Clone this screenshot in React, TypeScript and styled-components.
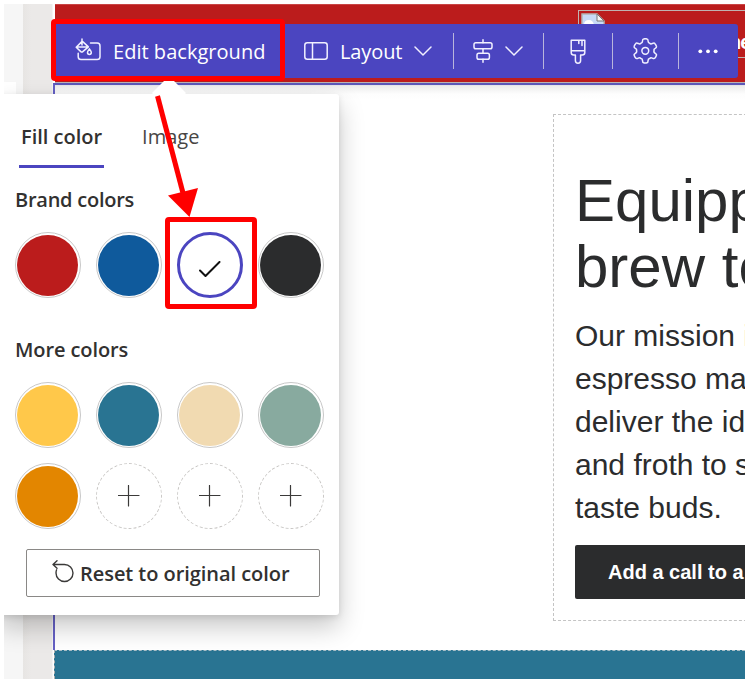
import React from "react";
import styled, { createGlobalStyle } from "styled-components";

const ui = `"Open Sans", "Noto Sans", sans-serif`;
const arial = `"Liberation Sans", Arial, sans-serif`;
const indigo = "#4b45c0";

const GlobalStyle = createGlobalStyle`
  *, *::before, *::after { box-sizing: border-box; }
  body { margin: 0; background: #fff; overflow: hidden; }
  button { font: inherit; margin: 0; cursor: pointer; }
`;

const Frame = styled.main`
  position: relative;
  display: flex;
  width: 741px;
  height: 675px;
  margin: 4px 0 0 4px;
  overflow: hidden;
  background: #fff;
`;

const Rail = styled.aside`
  flex: 0 0 19px;
  padding-top: 78px;
  background: #f6f6f6;
`;
const RailCard = styled.div`
  width: 12px;
  height: 300px;
  background: #fff;
`;
const Gutter = styled.div`
  flex: 0 0 30px;
  background: linear-gradient(90deg, #e7e5e3, #ebe9e8 8px);
  border-right: 1px solid #f4f4f4;
`;

const Canvas = styled.div`
  flex: 1;
  min-width: 0;
  display: flex;
  flex-direction: column;
`;
const Banner = styled.header`
  height: 79px;
  margin-left: 2px;
  padding: 6px 0 0 523px;
  background: #bb1c1c;
  border-top: 1px solid #c94444;
  border-bottom: 1px solid #b9b3b3;
`;
const MissingImage = styled.div`
  display: flex;
  width: 300px;
  height: 48px;
  padding: 2px;
  margin-top: -1px;
  border: 1px solid #c0b3b0;
`;
const AltText = styled.span`
  margin: 17px 0 0 124px;
  font: bold 20px/24px ${arial};
  letter-spacing: -1px;
  color: #fff;
`;
const Section = styled.section`
  height: 567px;
  padding: 29px 0 0 498px;
  border-left: 2px solid #6560c4;
  border-top: 2px solid #5c57b8;
  background: linear-gradient(#dddce8, #ececec 1px, #fdfdfd 9px, #fff 15px);
`;
const Column = styled.div`
  width: 400px;
  height: 507px;
  padding: 53px 0 0 21px;
  border: 1px dashed #c4c4c4;
  white-space: nowrap;
  color: #2b2c2d;
`;
const Heading = styled.h1`
  margin: 0;
  font: 400 60px/66px ${arial};
`;
const Copy = styled.p`
  margin: 14px 0 0;
  font: 30px/43px ${arial};
`;
const CallToAction = styled.button`
  display: block;
  width: 300px;
  height: 54px;
  margin-top: 16px;
  padding: 0 0 0 33px;
  border: 0;
  border-radius: 2px;
  background: #2b2c2d;
  color: #fff;
  text-align: left;
  && { font: bold 20px/54px ${arial}; }
`;
const Footer = styled.footer`
  height: 29px;
  margin-left: 1px;
  border-top: 1px dashed #a8bdc6;
  border-left: 1px dashed #b0b0b0;
  background: #297492;
`;

const Toolbar = styled.nav`
  position: absolute;
  left: 51px;
  top: 20px;
  z-index: 3;
  display: flex;
  width: 683px;
  height: 54px;
  border-radius: 0 3px 3px 0;
  background: ${indigo};
`;
const Tool = styled.button<{ $width: number; $pad?: number; $gap?: number }>`
  flex: 0 0 ${(p) => p.$width}px;
  display: flex;
  align-items: center;
  gap: ${(p) => p.$gap ?? 12}px;
  padding: 0 0 0 ${(p) => p.$pad ?? 20}px;
  border: 0;
  background: none;
  color: #fff;
  white-space: nowrap;
`;
const ToolText = styled.span<{ $track: number }>`
  padding-top: 1px;
  font: 400 20px/28px ${ui};
  letter-spacing: ${(p) => p.$track}px;
`;
const Divider = styled.span`
  flex: 0 0 1px;
  height: 36px;
  margin-top: 9px;
  background: #b9b5dc;
`;
const ToolIcon = styled.svg`
  flex: none;
  display: block;
  fill: none;
  stroke: #f1f0ff;
  stroke-width: 1.5;
  stroke-linecap: round;
  stroke-linejoin: round;
`;

const Popover = styled.section`
  position: absolute;
  left: -5px;
  top: 90px;
  z-index: 2;
  width: 340px;
  height: 521px;
  padding: 0 0 0 16px;
  border-radius: 3px;
  background: #fff;
  box-shadow: 0 12px 26px rgba(0, 0, 0, 0.22), 0 2px 6px rgba(0, 0, 0, 0.1);
  &::before {
    content: "";
    position: absolute;
    left: 158px;
    top: -13px;
    width: 24px;
    height: 24px;
    background: #fff;
    transform: rotate(45deg);
  }
`;
const Tabs = styled.div`
  position: relative;
  display: flex;
  gap: 38px;
  padding-left: 4px;
`;
const Tab = styled.button<{ $active?: boolean; $track: number }>`
  height: 74px;
  padding: 15px 0 0 ${(p) => (p.$active ? 2 : 0)}px;
  width: ${(p) => (p.$active ? 85 : 64)}px;
  border: 0;
  border-bottom: 3px solid ${(p) => (p.$active ? indigo : "transparent")};
  background: none;
  text-align: left;
  white-space: nowrap;
  color: ${(p) => (p.$active ? "#323130" : "#484644")};
  && { font: ${(p) => (p.$active ? 600 : 400)} 20px/28px ${ui}; }
  && { letter-spacing: ${(p) => p.$track}px; }
`;
const GroupTitle = styled.h2<{ $top: number; $track: number }>`
  margin: ${(p) => p.$top}px 0 18px;
  font: 600 20px/28px ${ui};
  letter-spacing: ${(p) => p.$track}px;
  color: #323130;
  white-space: nowrap;
`;
const Swatches = styled.div`
  display: grid;
  grid-template-columns: repeat(4, 66px);
  gap: 15px;
`;
const Swatch = styled.button<{ $fill?: string; $kind?: "selected" | "empty" }>`
  display: grid;
  place-items: center;
  width: 66px;
  height: 66px;
  padding: ${(p) => (p.$kind ? "0" : "2px 2px 1px 1px")};
  border-radius: 50%;
  border: ${(p) =>
    p.$kind === "selected"
      ? `3px solid ${indigo}`
      : p.$kind === "empty"
        ? "1px dashed #c8c6c4"
        : "1px solid #c8c8c8"};
  background: ${(p) => p.$fill ?? "#fff"} content-box;
`;
const Reset = styled.button`
  display: flex;
  align-items: flex-start;
  gap: 6px;
  width: 294px;
  height: 48px;
  margin: 20px 0 0 11px;
  padding: 10px 0 0 25px;
  border: 1px solid #8a8886;
  border-radius: 2px;
  background: #fff;
  color: #323130;
  white-space: nowrap;
  && { font: 600 20px/28px ${ui}; }
  && { letter-spacing: -0.05px; }
`;
const Glyph = styled.svg<{ $drop?: number }>`
  display: block;
  flex: none;
  margin-top: ${(p) => p.$drop ?? 0}px;
  fill: none;
  stroke: #3b3a39;
  stroke-linecap: round;
  stroke-linejoin: round;
`;

const Highlight = styled.div<{ $x: number; $y: number; $w: number; $h: number }>`
  position: absolute;
  z-index: 4;
  left: ${(p) => p.$x}px;
  top: ${(p) => p.$y}px;
  width: ${(p) => p.$w}px;
  height: ${(p) => p.$h}px;
  border: 5px solid #f00;
  border-radius: 4px;
  pointer-events: none;
`;
const Arrow = styled.svg`
  position: absolute;
  z-index: 5;
  left: 146px;
  top: 86px;
  pointer-events: none;
`;

const BucketIcon = () => (
  <ToolIcon width="26" height="26" viewBox="0 1.500 26 26">
    <path d="M7 2.500v6M6.600 5.400 1.200 10.800l4.600 4.300q1 .9 2 0l5.600-4.700L8 5.400q-.8-.6-1.400 0zM1.600 10.600h11" />
    <path d="M15.500 6.600h6.700q2.800 0 2.800 2.800v10.800q0 2.800-2.800 2.800H6q-2.800 0-2.800-2.800v-3.500" />
    <path d="M14.400 12.400q-1.900 2.400-1.900 3.600a1.900 1.900 0 0 0 3.800 0q0-1.200-1.900-3.600z" />
  </ToolIcon>
);
const LayoutIcon = () => (
  <ToolIcon width="24" height="18" viewBox="0 0 24 18">
    <rect x=".8" y=".8" width="22.400" height="16.400" rx="2.500" />
    <path d="M8.500 1v16" />
  </ToolIcon>
);
const Chevron = () => (
  <ToolIcon width="18" height="10" viewBox="0 0 18 10">
    <path d="M1 1l8 8 8-8" />
  </ToolIcon>
);
const AlignIcon = () => (
  <ToolIcon width="20" height="24" viewBox="0 0 20 24">
    <rect x="1" y="3.800" width="18" height="6" rx="1.800" />
    <rect x="4" y="14.200" width="12.400" height="6" rx="1.800" />
    <path d="M10 .8v3M10 9.800v4.400M10 20.200v3" />
  </ToolIcon>
);
const BrushIcon = () => (
  <ToolIcon width="16" height="25" viewBox="0 0 16 25">
    <path d="M1.200 1.200h13.600v12.300q0 2.500-2.500 2.500H10.600v5.600a2.600 2.600 0 0 1-5.200 0V16H3.700q-2.500 0-2.500-2.500zM1.200 11.800h13.600M8.800 1.500v3M12 1.500v5" />
  </ToolIcon>
);

/** Six-toothed gear outline centred on the origin. */
const gearPath = () => {
  const at = (deg: number, r: number) => {
    const a = (deg * Math.PI) / 180;
    return `${(Math.sin(a) * r).toFixed(2)} ${(-Math.cos(a) * r).toFixed(2)}`;
  };
  let d = "";
  for (let t = 0; t < 360; t += 60) {
    d += `${t ? "L" : "M"}${at(t - 16, 10.2)}Q${at(t - 13, 12.1)} ${at(t - 8, 12)}`;
    d += `Q${at(t, 12.3)} ${at(t + 8, 12)}Q${at(t + 13, 12.1)} ${at(t + 16, 10.2)}`;
    d += `Q${at(t + 19, 8.3)} ${at(t + 30, 8.8)}Q${at(t + 41, 8.3)} ${at(t + 44, 10.2)}`;
  }
  return d + "Z";
};
const GearIcon = () => (
  <ToolIcon width="26" height="26" viewBox="-13.300 -12.800 26 26">
    <path d={gearPath()} />
    <circle r="3.400" />
  </ToolIcon>
);
const MoreIcon = () => (
  <ToolIcon width="20" height="6" viewBox="0 0 20 6">
    <g fill="#fff" stroke="none">
      <circle cx="2.300" cy="3.300" r="1.900" />
      <circle cx="10" cy="3.300" r="1.900" />
      <circle cx="17.700" cy="3.300" r="1.900" />
    </g>
  </ToolIcon>
);
const BrokenImageIcon = () => (
  <svg width="24" height="28" viewBox="0 0 24 28">
    <path d="M1 1h15l7 7v19H1z" fill="#c8daf6" stroke="#b5b5b5" strokeWidth="1.500" />
    <path d="M3 12q0-5 5-5 4 0 5 5z" fill="#fff" />
    <path d="M16 1v7h7z" fill="#f4f4f4" stroke="#777" />
  </svg>
);
const Plus = () => (
  <Glyph width="22" height="22" viewBox="0 0 22 22" strokeWidth="1.200">
    <path d="M10.500 .5v20.500M0.500 10.500h20.500" />
  </Glyph>
);

const brand = ["#bb1c1c", "#0f5a9c", null, "#2b2c2d"];
const more = ["#ffc84a", "#297492", "#f1dab1", "#88aa9f", "#e38600", null, null, null];

export default function App() {
  return (
    <>
      <GlobalStyle />
      <Frame>
        <Rail>
          <RailCard />
        </Rail>
        <Gutter />
        <Canvas>
          <Banner>
            <MissingImage>
              <BrokenImageIcon />
              <AltText>ne</AltText>
            </MissingImage>
          </Banner>
          <Section>
            <Column>
              <Heading>
                Equipp
                <br />
                brew to
              </Heading>
              <Copy>
                Our mission is
                <br />
                espresso ma
                <br />
                deliver the id
                <br />
                and froth to s
                <br />
                taste buds.
              </Copy>
              <CallToAction>Add a call to a</CallToAction>
            </Column>
          </Section>
          <Footer />
        </Canvas>

        <Toolbar>
          <Tool $width={230}>
            <BucketIcon />
            <ToolText $track={0.03}>Edit background</ToolText>
          </Tool>
          <Tool $width={168} $pad={19}>
            <LayoutIcon />
            <ToolText $track={-0.1}>Layout</ToolText>
            <Chevron />
          </Tool>
          <Divider />
          <Tool $width={89} $pad={19} $gap={12}>
            <AlignIcon />
            <Chevron />
          </Tool>
          <Divider />
          <Tool $width={68} $pad={26}>
            <BrushIcon />
          </Tool>
          <Divider />
          <Tool $width={65} $pad={19}>
            <GearIcon />
          </Tool>
          <Divider />
          <Tool $width={59} $pad={19}>
            <MoreIcon />
          </Tool>
        </Toolbar>

        <Popover>
          <Tabs>
            <Tab $active $track={0}>Fill color</Tab>
            <Tab $track={0.05}>Image</Tab>
          </Tabs>
          <GroupTitle $top={18} $track={-0.25}>Brand colors</GroupTitle>
          <Swatches>
            {brand.map((c, i) =>
              c ? (
                <Swatch key={i} $fill={c} />
              ) : (
                <Swatch key={i} $kind="selected">
                  <Glyph $drop={8} width="22" height="16" viewBox="0 0 22 16" strokeWidth="2">
                    <path d="M1 9.500l5.500 5.500L20.500 1" stroke="#111" />
                  </Glyph>
                </Swatch>
              ),
            )}
          </Swatches>
          <GroupTitle $top={38} $track={-0.1}>More colors</GroupTitle>
          <Swatches>
            {more.map((c, i) =>
              c ? (
                <Swatch key={i} $fill={c} />
              ) : (
                <Swatch key={i} $kind="empty">
                  <Plus />
                </Swatch>
              ),
            )}
          </Swatches>
          <Reset>
            <Glyph width="22" height="24" viewBox="0 0 22 24" strokeWidth="1.400">
              <path d="M5 .8L1 4.500l4 3.700M1.200 4.500H12.500a8.500 8.500 0 1 1-8.500 8.500q0-1.800.6-3.200" />
            </Glyph>
            Reset to original color
          </Reset>
        </Popover>

        <Highlight $x={47} $y={15} $w={234} $h={62} />
        <Highlight $x={161} $y={213} $w={92} $h={92} />
        <Arrow width="54" height="130" viewBox="150 90 54 130">
          <path d="M157.500 96l26 99" stroke="#f00" strokeWidth="5" />
          <path d="M168 195.500l30-7.500-8.500 29z" fill="#f00" />
        </Arrow>
      </Frame>
    </>
  );
}
